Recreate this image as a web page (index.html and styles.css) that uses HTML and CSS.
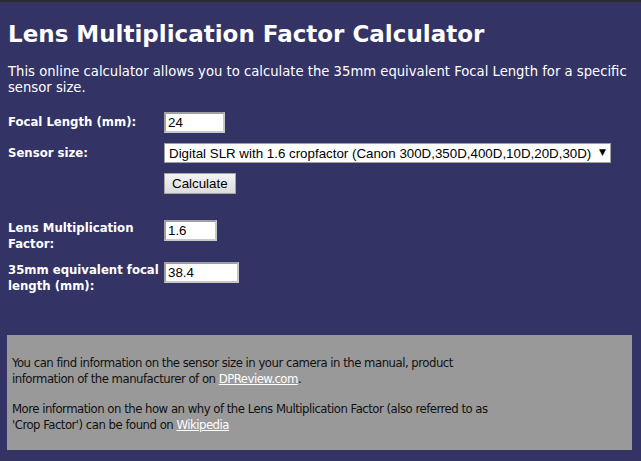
FILE: index.html
```html
<!DOCTYPE html>
<html lang="en">
<head>
<meta charset="UTF-8">
<title>Lens Multiplication Factor Calculator</title>
<link rel="stylesheet" href="styles.css">
</head>
<body>

<div class="page">
    <h1>Lens Multiplication Factor Calculator</h1>
    <p class="intro">This online calculator allows you to calculate the 35mm equivalent Focal Length for a specific sensor size.</p>

    <form class="calc" onsubmit="return false;">
        <label class="lbl" for="focal">Focal Length (mm):</label>
        <div><input type="text" id="focal" class="fld fld-focal" value="24"></div>

        <label class="lbl" for="sensor">Sensor size:</label>
        <div>
            <span class="sel-wrap">
                <select id="sensor" class="sel">
                    <option>Digital SLR with 1.6 cropfactor (Canon 300D,350D,400D,10D,20D,30D)</option>
                </select>
            </span>
        </div>

        <div></div>
        <div><button class="btn">Calculate</button></div>

        <div class="spacer"></div>
        <div class="spacer"></div>

        <label class="lbl lbl-2" for="factor">Lens Multiplication Factor:</label>
        <div><input type="text" id="factor" class="fld fld-factor" value="1.6"></div>

        <label class="lbl lbl-2" for="equiv">35mm equivalent focal length (mm):</label>
        <div><input type="text" id="equiv" class="fld fld-equiv" value="38.4"></div>
    </form>

    <div class="info">
        <p>You can find information on the sensor size in your camera in the manual, product information of the manufacturer of on <a href="#">DPReview.com</a>.</p>
        <p>More information on the how an why of the Lens Multiplication Factor (also referred to as 'Crop Factor') can be found on <a href="#">Wikipedia</a></p>
    </div>
</div>

</body>
</html>
```

FILE: styles.css
```css
html {
    background-color: #333366;
}
body {
    margin: 0;
    border-top: 2px solid #2b2b2b;
    font-family: 'DejaVu Sans', Verdana, sans-serif;
    font-size: 13.2px;
    color: #ffffff;
    background-color: #333366;
}
.page {
    padding: 0 9px 0 8px;
}
h1 {
    font-size: 23px;
    margin: 17px 0 15px 0;
    line-height: 30px;
}
.intro {
    margin: 0 0 16px 0;
    line-height: 16px;
}
.calc {
    display: grid;
    grid-template-columns: 156px auto;
    row-gap: 10px;
    align-items: start;
}
.lbl {
    font-family: 'DejaVu Sans Condensed', 'DejaVu Sans', sans-serif;
    font-stretch: condensed;
    font-weight: bold;
    font-size: 13px;
    line-height: 16px;
    padding-top: 2px;
}
.lbl-2 {
    padding-top: 0;
}
.spacer {
    height: 6px;
}
.fld {
    font-family: Arial, 'Liberation Sans', sans-serif;
    font-size: 13.33px;
    height: 21px;
    box-sizing: border-box;
    padding: 1px 2px;
    border: 2px solid #a0a0a0;
    border-right-color: #c8c8c8;
    border-bottom-color: #c8c8c8;
    background: #fff;
    color: #000;
    margin: 0;
}
.fld-focal { width: 61px; }
.fld-factor { width: 53px; }
.fld-equiv { width: 75px; }
.sel-wrap {
    position: relative;
    display: inline-block;
}
.sel-wrap::after {
    content: "\25BC";
    position: absolute;
    right: 5px;
    top: 4px;
    font-size: 9px;
    color: #000;
    pointer-events: none;
}
.sel {
    -webkit-appearance: none;
    appearance: none;
    font-family: Arial, 'Liberation Sans', sans-serif;
    font-size: 13.33px;
    height: 20px;
    width: 447px;
    border: 1px solid #a0a0a0;
    border-radius: 0;
    background: #fff;
    color: #000;
    margin: 0;
    padding: 0 2px 0 4px;
}
.btn {
    font-family: Arial, 'Liberation Sans', sans-serif;
    font-size: 13.33px;
    height: 21px;
    padding: 0 7px;
    border: 1px solid #a6a6a6;
    border-radius: 0;
    background: linear-gradient(#f4f4f4, #dcdcdc);
    color: #000;
    margin: 0;
}
.info {
    margin: 41px 0 0 -1px;
    background-color: #999999;
    color: #111111;
    font-family: 'DejaVu Sans Condensed', 'DejaVu Sans', sans-serif;
    font-stretch: condensed;
    font-size: 13px;
    letter-spacing: -0.5px;
    padding: 20px 5px 17px 5px;
}
.info p {
    max-width: 500px;
    margin: 0;
    line-height: 16px;
}
.info p + p {
    margin-top: 14px;
}
.info a {
    color: #ffffff;
}
```
